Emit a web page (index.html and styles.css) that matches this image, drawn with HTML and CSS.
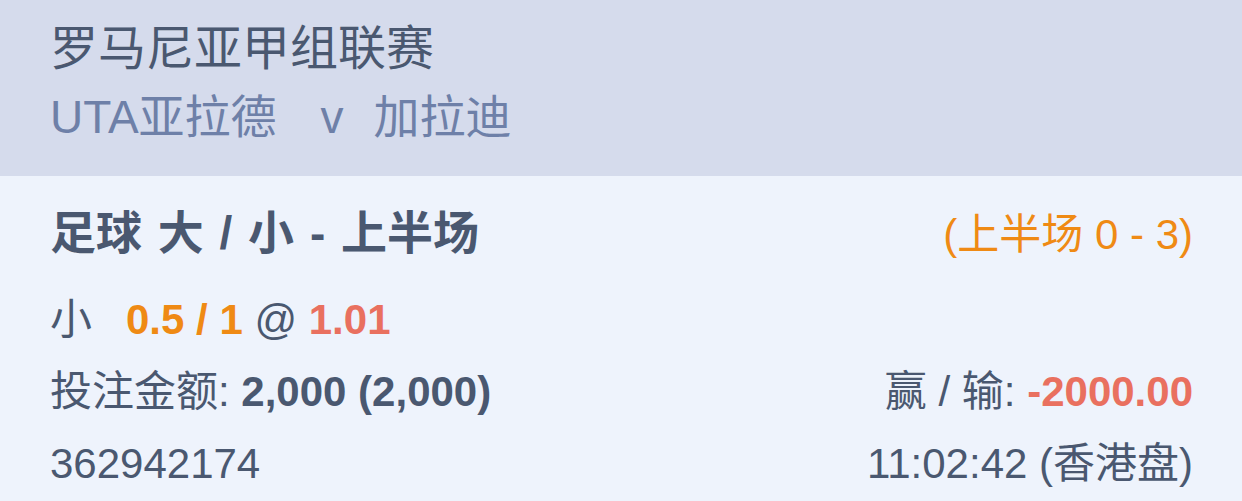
FILE: index.html
```html
<!DOCTYPE html>
<html lang="zh-CN">
<head>
<meta charset="utf-8">
<title>注单</title>
<link rel="stylesheet" href="styles.css">
</head>
<body>
<div class="card">
  <header class="match">
    <div class="league">罗马尼亚甲组联赛</div>
    <div class="teams">UTA亚拉德<span class="vs">v</span>加拉迪</div>
  </header>
  <section class="detail">
    <div class="row head">
      <div class="market">足球 大 / 小 - 上半场</div>
      <div class="score">(上半场 0 - 3)</div>
    </div>
    <div class="row">
      <div class="pick"><span class="side">小</span><span class="line">0.5 / 1</span> @ <span class="odds">1.01</span></div>
    </div>
    <div class="row">
      <div class="stake">投注金额: <b>2,000 (2,000)</b></div>
      <div class="result">赢 / 输: <b class="loss">-2000.00</b></div>
    </div>
    <div class="row">
      <div class="ref">362942174</div>
      <div class="time">11:02:42 (香港盘)</div>
    </div>
  </section>
</div>
</body>
</html>
```

FILE: styles.css
```css
* { box-sizing: border-box; }
html, body { margin: 0; padding: 0; }
body {
  font-family: "Liberation Sans", "Noto Sans CJK SC", sans-serif;
  color: #4a5870;
  background: #eef3fc;
  width: 1242px;
  height: 501px;
  overflow: hidden;
}
.card { display: flex; flex-direction: column; }
.match {
  background: #d5dbec;
  height: 176px;
  padding: 15px 50px 0;
}
.league {
  font-size: 48px;
  line-height: 68px;
  height: 68px;
  color: #4a5870;
  white-space: nowrap;
}
.teams {
  font-size: 46px;
  line-height: 68px;
  height: 68px;
  color: #6e80a8;
  white-space: nowrap;
}
.vs { margin: 0 30px 0 44px; }
.detail {
  padding: 19px 49px 0 50px;
  display: flex;
  flex-direction: column;
}
.row {
  display: flex;
  justify-content: space-between;
  align-items: baseline;
  height: 72px;
  line-height: 72px;
  font-size: 42px;
  white-space: nowrap;
}
.row.head { height: 76px; line-height: 76px; margin-bottom: 13px; }
.market {
  font-size: 46px;
  font-weight: 700;
  word-spacing: 3px;
}
.score { color: #ef8a14; }
.side { margin-right: 34px; }
.line { color: #ef8a14; font-weight: 700; }
.odds { color: #e9705f; font-weight: 700; }
b { font-weight: 700; }
.loss { color: #e9705f; }
```
